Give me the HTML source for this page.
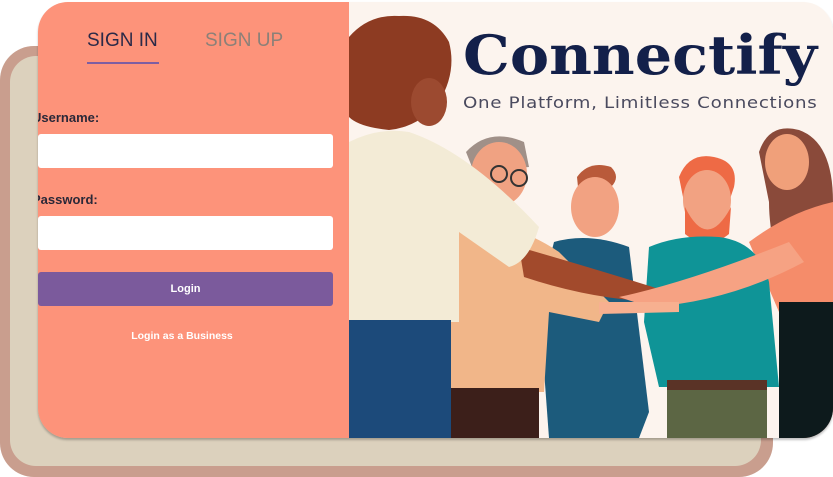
<!DOCTYPE html>
<html><head><meta charset="utf-8"><style>
*{margin:0;padding:0;box-sizing:border-box}
body{width:833px;height:477px;background:#fff;position:relative;overflow:hidden;font-family:"Liberation Sans",sans-serif}
.back{position:absolute;left:0;top:46px;width:773px;height:431px;background:#c99e8e;border-radius:34px}
.backin{position:absolute;left:10px;top:56px;width:751px;height:410px;background:#dcd1bd;border-radius:26px}
.card{position:absolute;left:38px;top:2px;width:795px;height:436px;border-radius:30px;overflow:hidden;box-shadow:0 2px 2px rgba(0,0,0,.25)}
.left{position:absolute;left:0;top:0;width:311px;height:436px;background:#fd937a}
.tab{position:absolute;top:28px;font-size:19px}
.lbl{position:absolute;left:-6px;font-size:13px;font-weight:bold;color:#2a2838}
.inp{position:absolute;left:0;width:295px;height:34px;background:#fff;border-radius:3px}
.right{position:absolute;left:311px;top:0;width:484px;height:436px;background:#fcf4ee}
</style></head><body>
<div class="back"></div><div class="backin"></div>
<div class="card">
 <div class="left">
  <div class="tab" style="left:49px;color:#2b2a48">SIGN IN</div>
  <div style="position:absolute;left:49px;top:60px;width:72px;height:2px;background:#7d5ea2"></div>
  <div class="tab" style="left:167px;color:#8c8078">SIGN UP</div>
  <div class="lbl" style="top:108px">Username:</div>
  <div class="inp" style="top:132px"></div>
  <div class="lbl" style="top:190px">Password:</div>
  <div class="inp" style="top:214px"></div>
  <div style="position:absolute;left:0;top:270px;width:295px;height:34px;background:#7b5a9c;border-radius:3px;color:#fff;font-size:11px;font-weight:bold;text-align:center;line-height:34px">Login</div>
  <div style="position:absolute;left:0;top:328px;width:288px;text-align:center;color:#fff;font-size:10.5px;font-weight:bold">Login as a Business</div>
 </div>
 <div class="right">
  <svg width="484" height="436" style="position:absolute;left:0;top:0">
   <path d="M410 150 Q420 120 450 128 Q484 140 484 200 L484 436 L440 436 L440 300 Q420 240 420 200Z" fill="#8a4a3a"/>
   <ellipse cx="438" cy="160" rx="22" ry="28" fill="#f0a07a"/>
   <path d="M400 240 Q440 210 484 200 L484 320 L430 310 Z" fill="#f58c6a"/>
   <rect x="430" y="300" width="54" height="136" fill="#0d1a1c"/>
   <path d="M330 175 Q340 150 365 155 Q390 160 385 185 L380 200 L335 200Z" fill="#ee6a45"/>
   <ellipse cx="358" cy="198" rx="24" ry="30" fill="#f2a282"/>
   <path d="M336 205 Q358 250 382 205 L380 232 Q358 250 336 232Z" fill="#ee6a45"/>
   <path d="M300 245 Q330 232 370 235 Q410 240 420 280 L430 385 L310 385 L295 320Z" fill="#0f9497"/>
   <rect x="318" y="380" width="100" height="56" fill="#5c6644"/>
   <rect x="318" y="378" width="100" height="10" fill="#5a3326"/>
   <path d="M228 175 Q240 158 262 165 Q272 175 262 185 L230 195Z" fill="#b95a3a"/>
   <ellipse cx="246" cy="205" rx="24" ry="30" fill="#f2a282"/>
   <path d="M205 240 Q240 230 280 245 L300 410 L290 436 L200 436 L190 300Z" fill="#1c5b7c"/>
   <path d="M117 150 Q140 125 175 140 L180 165 L125 170Z" fill="#a09088"/>
   <ellipse cx="150" cy="172" rx="28" ry="32" fill="#f0a282"/>
   <circle cx="150" cy="172" r="8" fill="none" stroke="#333" stroke-width="2"/><circle cx="170" cy="176" r="8" fill="none" stroke="#333" stroke-width="2"/>
   <path d="M90 225 Q150 210 210 250 L260 300 L250 320 L200 310 L195 390 L90 390Z" fill="#f1b689"/>
   <rect x="100" y="386" width="90" height="50" fill="#3c1f1a"/>
   <path d="M170 245 Q240 265 320 290 L322 300 Q250 300 175 275Z" fill="#a24a2c"/>
   <path d="M270 295 Q340 280 440 240 L455 260 Q380 300 300 305Z" fill="#f6a283"/>
   <path d="M250 300 Q290 300 330 300 L330 310 L250 312Z" fill="#f7b090"/>
   <path d="M0 35 Q20 12 50 14 Q85 12 100 40 Q108 70 90 100 Q70 125 40 128 Q10 125 0 115Z" fill="#8d3b22"/>
   <ellipse cx="80" cy="100" rx="18" ry="24" fill="#9c4a30"/>
   <path d="M0 140 Q30 125 60 130 Q120 150 190 225 Q180 260 160 265 L110 230 L110 305 L0 305Z" fill="#f3ebd6"/>
   <rect x="0" y="300" width="110" height="20" fill="#f3ebd6"/>
   <rect x="0" y="318" width="102" height="118" fill="#1c4a7a"/>
  </svg>
  <div style="position:absolute;left:114px;top:26px;font-family:'DejaVu Serif',serif;font-weight:bold;font-size:54px;color:#13204a;line-height:1;transform:scaleX(1.09);transform-origin:0 0;white-space:nowrap">Connectify</div>
  <div style="position:absolute;left:114px;top:91px;font-family:'DejaVu Sans',sans-serif;font-size:16px;color:#4a4a5e;letter-spacing:0.6px;white-space:nowrap;transform:scaleX(1.14);transform-origin:0 0">One Platform, Limitless Connections</div>
 </div>
</div>
</body></html>
